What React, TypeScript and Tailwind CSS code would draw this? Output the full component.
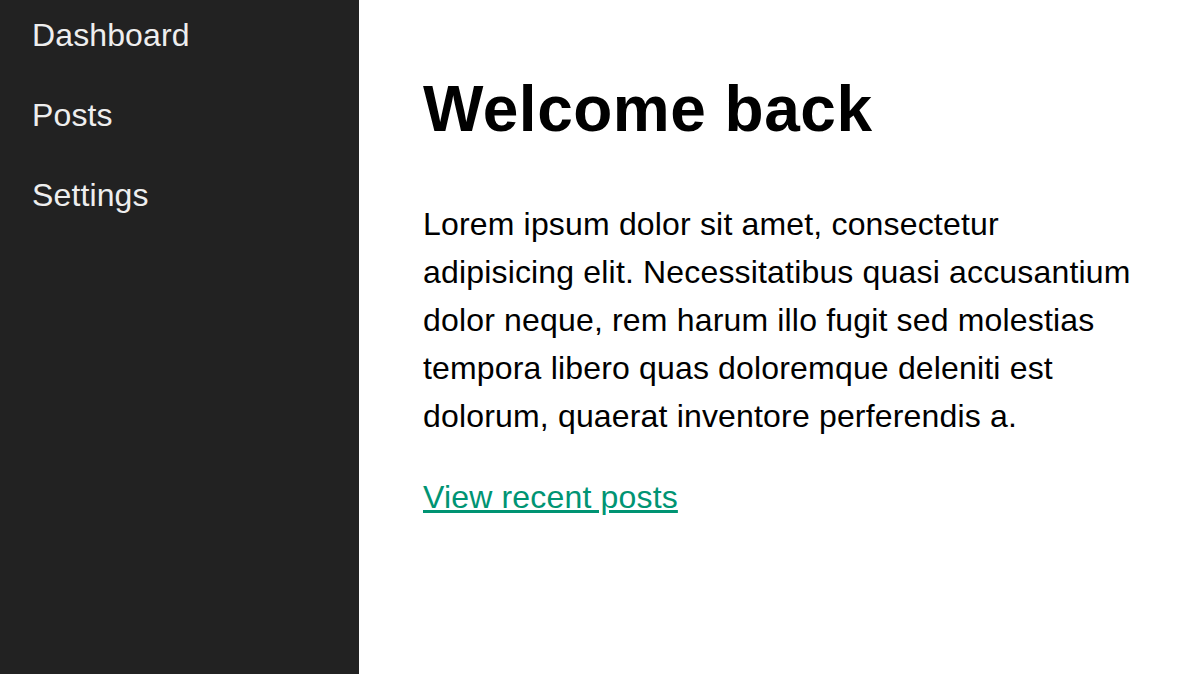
const navItems = ["Dashboard", "Posts", "Settings"];

const App = () => {
  return (
    <div className="flex min-h-[674px] font-['Liberation_Sans',Arial,sans-serif]">
      <aside className="w-[359px] shrink-0 bg-[#222222]">
        <nav className="flex flex-col px-8">
          {navItems.map((item) => (
            <a key={item} className="pt-[15px] pb-[25px] text-[32px] leading-[40px] tracking-[0.12px] text-[#eeeeee]" href="#">
              {item}
            </a>
          ))}
        </nav>
      </aside>
      <main className="flex-1 bg-white px-16 pt-[61px]">
        <h1 className="mb-[43px] text-[64px] font-bold leading-[96px] tracking-[0.5px] text-black">Welcome back</h1>
        <p className="text-[32px] leading-[48px] tracking-[0.17px] text-black">
          Lorem ipsum dolor sit amet, consectetur adipisicing elit. Necessitatibus quasi accusantium dolor neque, rem
          harum illo fugit sed molestias tempora libero quas doloremque deleniti est dolorum, quaerat inventore
          perferendis a.
        </p>
        <a className="mt-[33px] block text-[32px] leading-[48px] tracking-[0.17px] text-[#009473] underline" href="#">
          View recent posts
        </a>
      </main>
    </div>
  );
};

export default App;
